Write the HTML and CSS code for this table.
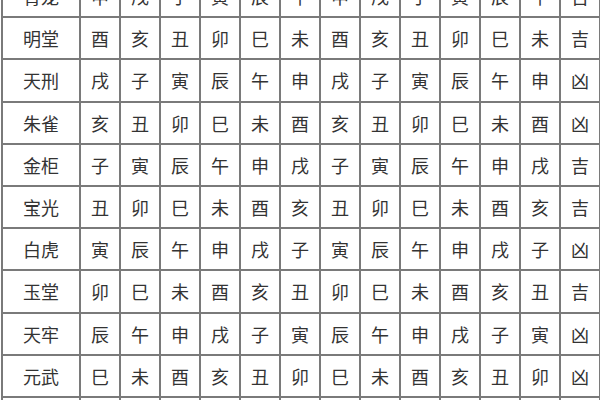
FILE: index.html
```html
<!DOCTYPE html>
<html lang="zh">
<head>
<meta charset="utf-8">
<link rel="stylesheet" href="styles.css">
</head>
<body>
<table class="grid">
<colgroup><col class="c-name"><col span="13" class="c-cell"></colgroup>
<tbody>
<tr><td>青龙</td><td>申</td><td>戌</td><td>子</td><td>寅</td><td>辰</td><td>午</td><td>申</td><td>戌</td><td>子</td><td>寅</td><td>辰</td><td>午</td><td>吉</td></tr>
<tr><td>明堂</td><td>酉</td><td>亥</td><td>丑</td><td>卯</td><td>巳</td><td>未</td><td>酉</td><td>亥</td><td>丑</td><td>卯</td><td>巳</td><td>未</td><td>吉</td></tr>
<tr><td>天刑</td><td>戌</td><td>子</td><td>寅</td><td>辰</td><td>午</td><td>申</td><td>戌</td><td>子</td><td>寅</td><td>辰</td><td>午</td><td>申</td><td>凶</td></tr>
<tr><td>朱雀</td><td>亥</td><td>丑</td><td>卯</td><td>巳</td><td>未</td><td>酉</td><td>亥</td><td>丑</td><td>卯</td><td>巳</td><td>未</td><td>酉</td><td>凶</td></tr>
<tr><td>金柜</td><td>子</td><td>寅</td><td>辰</td><td>午</td><td>申</td><td>戌</td><td>子</td><td>寅</td><td>辰</td><td>午</td><td>申</td><td>戌</td><td>吉</td></tr>
<tr><td>宝光</td><td>丑</td><td>卯</td><td>巳</td><td>未</td><td>酉</td><td>亥</td><td>丑</td><td>卯</td><td>巳</td><td>未</td><td>酉</td><td>亥</td><td>吉</td></tr>
<tr><td>白虎</td><td>寅</td><td>辰</td><td>午</td><td>申</td><td>戌</td><td>子</td><td>寅</td><td>辰</td><td>午</td><td>申</td><td>戌</td><td>子</td><td>凶</td></tr>
<tr><td>玉堂</td><td>卯</td><td>巳</td><td>未</td><td>酉</td><td>亥</td><td>丑</td><td>卯</td><td>巳</td><td>未</td><td>酉</td><td>亥</td><td>丑</td><td>吉</td></tr>
<tr><td>天牢</td><td>辰</td><td>午</td><td>申</td><td>戌</td><td>子</td><td>寅</td><td>辰</td><td>午</td><td>申</td><td>戌</td><td>子</td><td>寅</td><td>凶</td></tr>
<tr><td>元武</td><td>巳</td><td>未</td><td>酉</td><td>亥</td><td>丑</td><td>卯</td><td>巳</td><td>未</td><td>酉</td><td>亥</td><td>丑</td><td>卯</td><td>凶</td></tr>
<tr><td>司命</td><td>午</td><td>申</td><td>戌</td><td>子</td><td>寅</td><td>辰</td><td>午</td><td>申</td><td>戌</td><td>子</td><td>寅</td><td>辰</td><td>吉</td></tr>
</tbody>
</table>
</body>
</html>
```
FILE: styles.css
```css
html, body {
  margin: 0;
  padding: 0;
  background: #fff;
  overflow: hidden;
}
.grid {
  border-collapse: collapse;
  table-layout: fixed;
  width: 598px;
  margin: -26px 0 0 1px;
  font-family: "Noto Sans CJK SC", "Noto Sans", sans-serif;
  font-size: 18px;
  color: #333;
}
.c-name { width: 78px; }
.c-cell { width: 40px; }
.grid td {
  border: 2px solid #7a7a7a;
  height: 42.2px;
  box-sizing: border-box;
  padding: 0;
  text-align: center;
  vertical-align: middle;
  line-height: 1;
}
```
